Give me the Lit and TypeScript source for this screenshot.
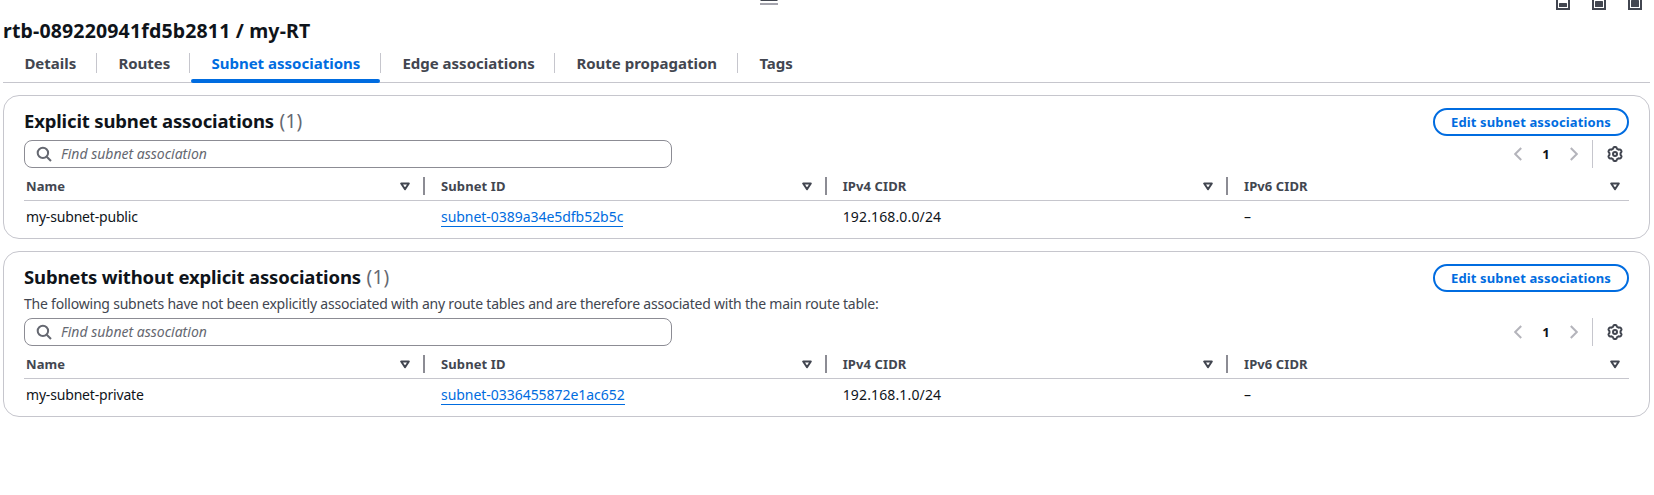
import { LitElement, html, css, svg, nothing } from "lit";
import { customElement, property } from "lit/decorators.js";
import { classMap } from "lit/directives/class-map.js";

const sortIcon = html`<svg class="sort" width="10" height="9" viewBox="0 0 10 9"><path d="M1.2 1.5h7.6L5 7.2z" fill="none" stroke="#424650" stroke-width="2" stroke-linejoin="round"/></svg>`;

// Six-lobed outline of the settings gear.
const gearPath = (() => {
  const pts: string[] = [];
  for (let i = 0; i < 96; i++) {
    const a = (i / 96) * Math.PI * 2;
    const r = 6.3 + 0.75 * Math.tanh(2.4 * Math.cos(6 * a));
    pts.push(`${(8 + r * Math.sin(a)).toFixed(2)} ${(8 - r * Math.cos(a)).toFixed(2)}`);
  }
  return "M" + pts.join("L") + "Z";
})();

interface Row { name: string; id: string; cidr: string; }

@customElement("subnet-panel")
class SubnetPanel extends LitElement {
  @property() heading = "";
  @property() description = "";
  @property({ attribute: false }) row!: Row;

  static styles = css`
    :host { display: block; box-sizing: border-box; border: 1px solid #c6c6cd; border-radius: 16px; padding: 12px 20px 0; background: #fff; }
    .head { display: flex; justify-content: space-between; align-items: flex-start; height: 28px; }
    h2 { margin: 0; font-size: 18.5px; line-height: 25px; font-weight: 700; letter-spacing: -0.16px; color: #0f141a; white-space: nowrap; }
    .count { font-weight: 400; font-size: 19px; color: #656871; letter-spacing: 0.2px; margin-left: 1px; }
    .edit { box-sizing: border-box; width: 196px; height: 28px; border: 2px solid #006ce0; border-radius: 14px; background: #fff; color: #006ce0; font: inherit; font-weight: 700; font-size: 13px; line-height: 24px; letter-spacing: 0.13px; padding: 0; white-space: nowrap; }
    .desc { margin: 2px 0 0; height: 24px; line-height: 20px; color: #424650; letter-spacing: -0.215px; white-space: nowrap; }
    .tools { display: flex; justify-content: space-between; margin-top: 4px; height: 28px; }
    .desc + .tools { margin-top: 0; }
    .search { box-sizing: border-box; width: 648px; height: 28px; border: 1px solid #8c8c94; border-radius: 8px; display: flex; align-items: center; padding-left: 11px; gap: 9px; color: #656871; font-style: italic; letter-spacing: 0; }
    .search > span { line-height: 20px; padding-bottom: 1px; }
    .pager { display: flex; align-items: center; height: 28px; }
    .num { width: 48px; text-align: center; font-weight: 700; font-size: 13px; color: #0f141a; line-height: 28px; }
    .bar { width: 1px; height: 28px; background: #c6c6cd; margin: 0 14px; }
    .gear { margin-right: 6px; }
    .row { display: grid; grid-template-columns: 401px 401.7px 401.3px 1fr; }
    .th { height: 32px; border-bottom: 1px solid #c6c6cd; }
    .th > div { display: flex; align-items: center; justify-content: space-between; padding-left: 16px; padding-right: 8px; font-weight: 700; font-size: 13px; color: #424650; letter-spacing: 0.1px; height: 32px; padding-top: 4px; box-sizing: border-box; }
    .th > div > span:first-child { line-height: 20px; }
    .th > div:first-child, .td > div:first-child { padding-left: 2px; }
    .tail { display: flex; align-items: center; gap: 13px; margin-right: -8px; }
    .th > div:last-child .tail { margin-right: 1px; }
    .split { width: 2px; height: 18px; background: #8c8c94; }
    .td { height: 37px; }
    .td > div { padding-left: 16px; line-height: 22px; padding-top: 5px; color: #0f141a; letter-spacing: -0.18px; }
    .td > .ip { letter-spacing: 0.14px; }
    .link { color: #006ce0; text-decoration: none; display: inline-block; line-height: 20px; height: 19px; border-bottom: 1px solid #006ce0; letter-spacing: -0.04px; }
    svg { display: block; flex: none; }
  `;

  render() {
    const cols = ["Name", "Subnet ID", "IPv4 CIDR", "IPv6 CIDR"];
    return html`
      <div class="head">
        <h2>${this.heading} <span class="count">(1)</span></h2>
        <button class="edit">Edit subnet associations</button>
      </div>
      ${this.description ? html`<p class="desc">${this.description}</p>` : nothing}
      <div class="tools">
        <div class="search">
          <svg width="16" height="16" viewBox="0 0 16 16" fill="none" stroke="#656871" stroke-width="2"><circle cx="6.9" cy="6.9" r="5.2"/><path d="M10.7 10.7 15 15"/></svg>
          <span>Find subnet association</span>
        </div>
        <div class="pager">
          <svg width="8" height="14" viewBox="0 0 8 14" fill="none" stroke="#b4b4bb" stroke-width="2"><path d="M7.2 1 1.2 7l6 6"/></svg>
          <span class="num">1</span>
          <svg width="8" height="14" viewBox="0 0 8 14" fill="none" stroke="#b4b4bb" stroke-width="2"><path d="M.8 1l6 6-6 6"/></svg>
          <span class="bar"></span>
          <svg class="gear" width="16" height="16" viewBox="0 0 16 16" fill="none" stroke="#424650" stroke-width="2">${svg`<path d=${gearPath} stroke-linejoin="round"/>`}<circle cx="8" cy="8" r="2"/></svg>
        </div>
      </div>
      <div class="row th">
        ${cols.map((c, i) => html`<div><span>${c}</span><span class="tail">${sortIcon}${i < 3 ? html`<span class="split"></span>` : nothing}</span></div>`)}
      </div>
      <div class="row td">
        <div><span>${this.row.name}</span></div>
        <div><a class="link">${this.row.id}</a></div>
        <div class="ip"><span>${this.row.cidr}</span></div>
        <div><span>–</span></div>
      </div>`;
  }
}

@customElement("app-root")
class AppRoot extends LitElement {
  static styles = css`
    :host { display: block; box-sizing: border-box; height: 495px; overflow: hidden; background: #fff; font-family: "Noto Sans", "Open Sans", sans-serif; font-size: 14px; color: #0f141a; padding: 0 4px 0 3px; }
    .top { display: grid; grid-template-columns: 757px 1fr auto; height: 17px; align-items: start; }
    .top svg { display: block; }
    .sizes { display: flex; gap: 22px; padding-right: 8px; }
    h1 { margin: 0; font-size: 19.5px; font-weight: 700; line-height: 28px; height: 36px; letter-spacing: 0.16px; white-space: nowrap; }
    .tabs { display: flex; height: 29px; border-bottom: 1px solid #c6c6cd; }
    .tab { box-sizing: border-box; height: 29px; padding-left: 21.4px; font-size: 15px; font-weight: 700; line-height: 21px; color: #424650; position: relative; white-space: nowrap; letter-spacing: 0; }
    .tab:not(:last-child)::after { content: ""; position: absolute; right: 0; top: 0; width: 1px; height: 20px; background: #c6c6cd; }
    .t0 { width: 94px; }
    .t1 { width: 93px; }
    .t2 { width: 191px; }
    .t3 { width: 174px; }
    .t4 { width: 183px; }
    .active { color: #006ce0; }
    .active::before { content: ""; position: absolute; left: 1px; right: 1px; bottom: -1px; height: 4px; border-radius: 2px; background: #006ce0; }
    .panels { display: grid; gap: 12px; margin-top: 12px; }
  `;

  render() {
    const tabs = ["Details", "Routes", "Subnet associations", "Edge associations", "Route propagation", "Tags"];
    return html`
      <div class="top">
        <span></span>
        <svg width="18" height="5" viewBox="0 0 18 5"><path d="M.5 0h17v1H.5z" fill="#424650"/><path d="M0 3h18v2H0z" fill="#a4a4ad"/></svg>
        <div class="sizes">
          ${[3, 1, 0].map((top) => html`<svg width="14" height="10" viewBox="0 0 14 10"><path d="M1 0v9h12V0" fill="none" stroke="#424650" stroke-width="2"/>${svg`<rect x="3" y=${top} width="8" height=${7 - top} rx="0.6" fill="#424650"/>`}</svg>`)}
        </div>
      </div>
      <h1>rtb-089220941fd5b2811 / my-RT</h1>
      <nav class="tabs">
        ${tabs.map((t, i) => html`<div class=${classMap({ tab: true, active: i === 2, ["t" + i]: true })}>${t}</div>`)}
      </nav>
      <div class="panels">
        <subnet-panel heading="Explicit subnet associations" .row=${{ name: "my-subnet-public", id: "subnet-0389a34e5dfb52b5c", cidr: "192.168.0.0/24" }}></subnet-panel>
        <subnet-panel heading="Subnets without explicit associations" description="The following subnets have not been explicitly associated with any route tables and are therefore associated with the main route table:" .row=${{ name: "my-subnet-private", id: "subnet-0336455872e1ac652", cidr: "192.168.1.0/24" }}></subnet-panel>
      </div>`;
  }
}
